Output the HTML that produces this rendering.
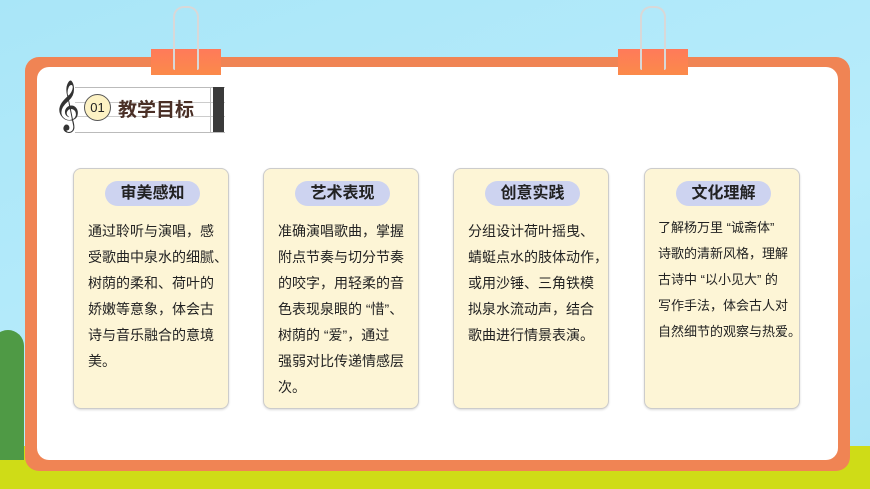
<!DOCTYPE html>
<html><head><meta charset="utf-8"><style>
body{margin:0;width:870px;height:489px;overflow:hidden;position:relative;background:linear-gradient(160deg,#a9e6f8,#b8ecfb 60%,#a8e4f6);font-family:"Liberation Sans","Noto Sans CJK SC",sans-serif}
.grass{position:absolute;left:0;top:446px;width:870px;height:43px;background:#cfdc17}
.tree{position:absolute;left:-8px;top:330px;width:32px;height:130px;background:#4f9a45;border-radius:16px 16px 0 0}
.frame{position:absolute;left:25px;top:57px;width:825px;height:414px;background:#f08454;border-radius:14px}
.inner{position:absolute;left:37px;top:67px;width:801px;height:393px;background:#fff;border-radius:12px}
.clip{position:absolute;top:49px;width:70px;height:26px;background:linear-gradient(#ff7a5a,#fb8a4a);}
.wire{position:absolute;width:22px;height:62px;border:2px solid #d8d8d8;border-bottom:none}
.card{position:absolute;top:168px;width:154px;height:239px;background:#fdf5d6;border:1px solid #ccc;border-radius:8px;box-shadow:0 1px 2px rgba(0,0,0,.15)}
.pill{position:absolute;left:31px;top:12px;width:95px;height:25px;background:#cdd3f0;border-radius:13px;text-align:center;font-weight:bold;font-size:16px;line-height:25px;color:#222}
.txt{position:absolute;left:14px;top:49px;white-space:nowrap;font-size:14px;line-height:26px;color:#222}
.staff{position:absolute;left:75px;top:87px;width:150px;height:44px;border-top:1px solid #bbb;border-bottom:1px solid #bbb}
</style></head><body>
<div class="grass"></div><div class="tree"></div>
<div class="frame"></div><div class="inner"></div>
<div class="clip" style="left:151px"></div>
<div class="wire" style="left:173px;top:6px;border-radius:11px 11px 2px 2px"></div>
<div class="clip" style="left:618px"></div>
<div class="wire" style="left:640px;top:6px;border-radius:11px 11px 2px 2px"></div>
<div class="staff"><div style="position:absolute;left:0;right:0;top:14px;border-top:1px solid #ccc"></div><div style="position:absolute;left:0;right:0;top:28px;border-top:1px solid #ccc"></div></div>
<div style="position:absolute;left:210px;top:87px;width:1px;height:45px;background:#bbb"></div>
<div style="position:absolute;left:213px;top:87px;width:11px;height:45px;background:#3a3a3a"></div>
<div style="position:absolute;left:54px;top:80px;font-size:44px;color:#333;font-family:'DejaVu Sans',serif">𝄞</div>
<div style="position:absolute;left:84px;top:94px;width:25px;height:25px;border-radius:50%;background:#fdf2c4;border:1px solid #555;font-size:13px;line-height:25px;text-align:center;color:#222">01</div>
<div style="position:absolute;left:118px;top:95px;font-size:19px;font-weight:bold;color:#4a2f26">教学目标</div>

<div class="card" style="left:73px"><div class="pill">审美感知</div><div class="txt">通过聆听与演唱，感<br>受歌曲中泉水的细腻、<br>树荫的柔和、荷叶的<br>娇嫩等意象，体会古<br>诗与音乐融合的意境<br>美。</div></div>
<div class="card" style="left:263px"><div class="pill">艺术表现</div><div class="txt">准确演唱歌曲，掌握<br>附点节奏与切分节奏<br>的咬字，用轻柔的音<br>色表现泉眼的 “惜”、<br>树荫的 “爱”，通过<br>强弱对比传递情感层<br>次。</div></div>
<div class="card" style="left:453px"><div class="pill">创意实践</div><div class="txt">分组设计荷叶摇曳、<br>蜻蜓点水的肢体动作，<br>或用沙锤、三角铁模<br>拟泉水流动声，结合<br>歌曲进行情景表演。</div></div>
<div class="card" style="left:644px"><div class="pill">文化理解</div><div class="txt" style="font-size:13px;top:46px;left:13px">了解杨万里 “诚斋体”<br>诗歌的清新风格，理解<br>古诗中 “以小见大” 的<br>写作手法，体会古人对<br>自然细节的观察与热爱。</div></div>
</body></html>
